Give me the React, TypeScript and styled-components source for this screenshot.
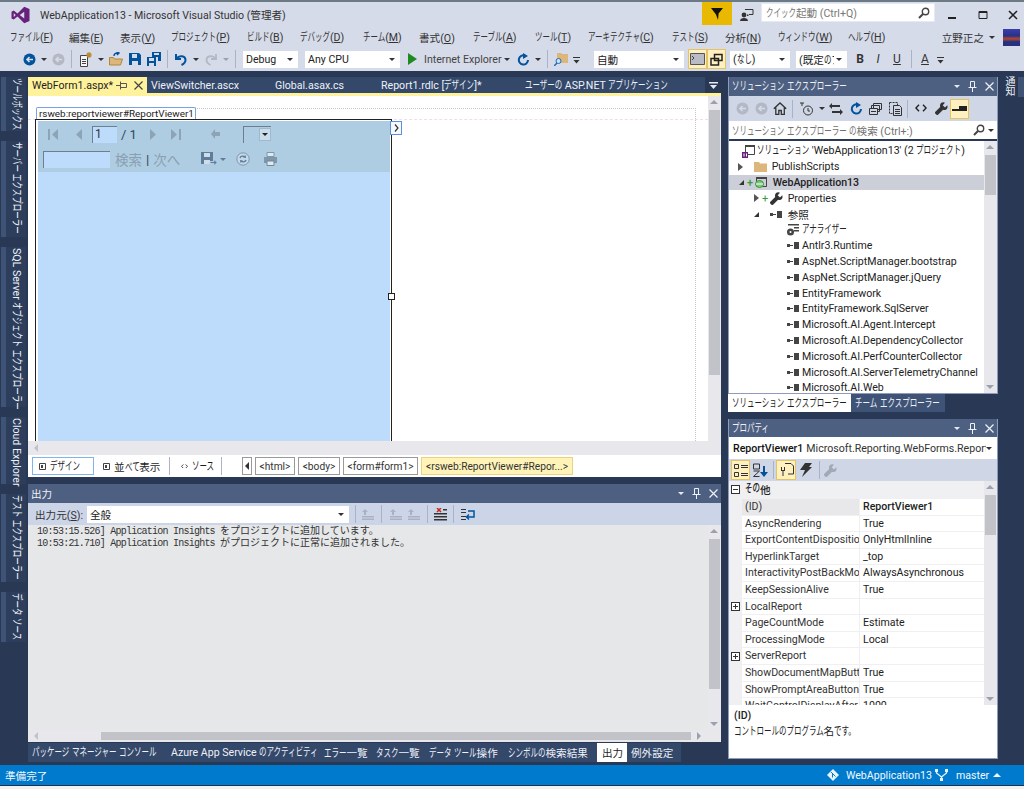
import React from 'react';
import styled, { createGlobalStyle } from 'styled-components';

const GlobalStyle = createGlobalStyle`
  html, body {
    margin: 0;
    width: 1024px;
    height: 789px;
    overflow: hidden;
    background: #f1f1f1;
  }

  body {
    font-family: Roboto, "Noto Sans CJK JP", sans-serif;
    font-size: 10.6px;
    color: #1e1e1e;
  }

  * {
    box-sizing: border-box;
  }
`;

// the reference font has narrow kana: each kana is 1em wide here, so squeeze the run
const Kana = styled.span<{ $n: number; $v?: boolean }>`
  display: inline-block;
  font-size: 1.08em;
  line-height: 1;
  white-space: pre;
  transform-origin: ${p => (p.$v ? 'center top' : 'left center')};
  transform: ${p => (p.$v ? 'scaleY(0.655)' : 'scaleX(0.655)')};
  ${p => (p.$v ? 'margin-bottom' : 'margin-right')}: ${p => -p.$n * 0.345}em;
`;

const T: React.FC<{ children: string; v?: boolean }> = ({ children, v }) => (
  <>
    {children.split(/([\u3002\u3040-\u30ff]+)/).map((part, i) =>
      i % 2 ? <Kana key={i} $n={part.length} $v={v}>{part}</Kana> : part,
    )}
  </>
);

const Window = styled.div`
  width: 1024px;
  height: 786px;
  display: flex;
  flex-direction: column;
  background: #293955;
  border-top: 2px solid #6c7a86;
  border-bottom: 1px solid #22304a;
`;

const Chrome = styled.header`
  flex: none;
  background: #d6dbe9;
`;

const TitleRow = styled.div`
  height: 25px;
  display: flex;
  align-items: center;
  padding-left: 11px;
`;

const Title = styled.span`
  margin-left: 10px;
  color: #333;
  white-space: nowrap;
`;

const FlagButton = styled.div`
  margin-left: auto;
  width: 30px;
  height: 23px;
  align-self: flex-start;
  display: flex;
  align-items: center;
  justify-content: center;
  background: #e8b900;
`;

const FeedbackSlot = styled.div`
  width: 29px;
  display: flex;
  justify-content: center;
`;

const QuickLaunch = styled.div`
  width: 174px;
  height: 19px;
  margin-top: -4px;
  padding: 0 4px;
  display: flex;
  align-items: center;
  justify-content: space-between;
  background: #fff;
  border: 1px solid #e6e9f1;
  color: #777;
`;

const WindowButtons = styled.div`
  width: 89px;
  display: flex;
  justify-content: space-between;
  padding: 0 6px 0 12px;
`;

const MenuRow = styled.nav`
  height: 20px;
  display: flex;
  align-items: center;
  padding-left: 10px;
  color: #333;
`;

const MenuItem = styled.span<{ $w: number }>`
  flex: none;
  width: ${p => p.$w}px;
  white-space: nowrap;
`;

const UserName = styled.span`
  margin-left: auto;
  color: #333;
  display: flex;
  align-items: center;
  gap: 5px;
`;

const Avatar = styled.span`
  width: 17px;
  height: 17px;
  margin: 0 4px 0 3px;
  background: linear-gradient(180deg, #3a3fb0 0%, #2a2f88 40%, #b0492c 58%, #27307f 75%);
`;

const ToolRow = styled.div<{ $bg?: string; $h: number; $pl?: number }>`
  flex: none;
  height: ${p => p.$h}px;
  display: flex;
  align-items: center;
  padding-left: ${p => p.$pl ?? 0}px;
  background: ${p => p.$bg ?? 'transparent'};
`;

const Slot = styled.span<{ $w: number; $on?: boolean; $ml?: number }>`
  flex: none;
  width: ${p => p.$w}px;
  height: ${p => (p.$on ? '20px' : 'auto')};
  margin-left: ${p => p.$ml ?? 0}px;
  display: flex;
  align-items: center;
  justify-content: center;
  background: ${p => (p.$on ? '#fff0c0' : 'transparent')};
  border: ${p => (p.$on ? '1px solid #e5c365' : 'none')};
  font-size: 12px;
  color: #333;
`;

const Sep = styled.span<{ $w: number }>`
  flex: none;
  width: ${p => p.$w}px;
  height: 18px;
  display: flex;
  justify-content: center;

  &::after {
    content: '';
    width: 1px;
    background: #a9b2c6;
  }
`;

const Grip = styled.span<{ $w: number }>`
  flex: none;
  width: ${p => p.$w}px;
  height: 16px;
  display: flex;
  justify-content: center;

  &::after {
    content: '';
    width: 5px;
    background-image: radial-gradient(#8a92a5 0.6px, transparent 0.7px);
    background-size: 2px 2px;
  }
`;

const Caret = styled.i<{ $c?: string }>`
  flex: none;
  display: block;
  width: 0;
  height: 0;
  border-left: 3px solid transparent;
  border-right: 3px solid transparent;
  border-top: 3px solid ${p => p.$c ?? '#333'};
`;

const Select = styled.span<{ $w: number; $ml?: number }>`
  flex: none;
  width: ${p => p.$w}px;
  height: 17px;
  margin-left: ${p => p.$ml ?? 0}px;
  padding: 0 5px 0 3px;
  display: flex;
  align-items: center;
  justify-content: space-between;
  gap: 2px;
  background: #fff;
  color: #222;
  white-space: nowrap;
`;

const SelectText = styled.span`
  flex: 1;
  min-width: 0;
  overflow: hidden;
`;

const PlayLabel = styled.span`
  flex: none;
  width: 78px;
  color: #444;
  white-space: nowrap;
`;

const Ico = styled.svg`
  display: block;
  flex: none;
`;

const Body = styled.div`
  flex: 1;
  min-height: 0;
  display: flex;
  padding-top: 6px;
`;

const SideStrip = styled.aside<{ $w: number }>`
  flex: none;
  width: ${p => p.$w}px;
  display: flex;
  flex-direction: column;
`;

const VTab = styled.div<{ $h: number; $mb: number }>`
  flex: none;
  width: 25px;
  height: ${p => p.$h}px;
  margin-bottom: ${p => p.$mb}px;
  margin-left: 1px;
  padding-top: 1px;
  border-left: 5px solid #3f5377;
  background: #2c3e5c;
  color: #eef1f7;
  line-height: 20px;
  writing-mode: vertical-rl;
  text-orientation: sideways;
  white-space: nowrap;
`;

const RightTab = styled.div`
  width: 26px;
  height: 20px;
  padding-left: 5px;
  border-right: 6px solid #3f5377;
  color: #eef1f7;
  font-size: 10px;
  line-height: 10px;
  text-align: center;
`;

const CenterColumn = styled.main`
  flex: none;
  width: 693px;
  display: flex;
  flex-direction: column;
`;

const RightColumn = styled.section`
  flex: none;
  width: 270px;
  margin-left: 7px;
  display: flex;
  flex-direction: column;
`;

const DocWell = styled.div`
  flex: none;
  height: 400px;
  display: flex;
  flex-direction: column;
`;

const DocTabs = styled.div`
  flex: none;
  height: 16px;
  display: flex;
  color: #f2f4f8;
`;

const DocTabStrip = styled.div`
  width: 677px;
  display: flex;
  align-items: center;
  background: #34486a;
`;

const DocTab = styled.span<{ $w: number; $active?: boolean }>`
  flex: none;
  width: ${p => p.$w}px;
  height: 100%;
  padding: 0 4px;
  display: flex;
  align-items: center;
  background: ${p => (p.$active ? '#fff29d' : 'transparent')};
  color: ${p => (p.$active ? '#1e1e1e' : '#eef1f7')};
  white-space: nowrap;
`;

const TabActions = styled.span`
  margin-left: auto;
  display: flex;
  gap: 7px;
  align-items: center;
  color: #555;
`;

const TabMenu = styled.span`
  flex: 1;
  display: flex;
  justify-content: center;
  padding-top: 5px;
`;

const YellowRule = styled.div`
  flex: none;
  height: 3px;
  background: #fff29d;
`;

const DesignRow = styled.div`
  flex: none;
  height: 345px;
  display: flex;
  background: #fff;
`;

const Surface = styled.div`
  position: relative;
  flex: 1;
  overflow: hidden;
  padding: 11px 0 0 7px;
  display: flex;
  flex-direction: column;
  align-items: flex-start;
`;

const PageGuide = styled.div`
  position: absolute;
  left: 36px;
  top: 12px;
  width: 632px;
  height: 345px;
  border-top: 1px dotted #c6c6c6;
  border-right: 1px dotted #c6c6c6;
`;

const MarginGuide = styled.div`
  position: absolute;
  left: 0;
  right: 0;
  top: 23px;
  border-top: 1px dashed #f4dede;
`;

const ControlTag = styled.div`
  position: relative;
  z-index: 1;
  width: 160px;
  height: 12px;
  margin-left: 1px;
  padding: 0 2px;
  background: #fff;
  border: 1px solid #7ba2e0;
  border-bottom: none;
  border-radius: 2px 2px 0 0;
  color: #222;
  font-size: 9.9px;
  line-height: 11px;
  white-space: nowrap;
`;

const Control = styled.div`
  position: relative;
  z-index: 1;
  width: 357px;
  flex: 1;
  padding: 1px 0 0 2px;
  display: flex;
  flex-direction: column;
  border: 1px solid #222;
  border-bottom: none;
  background: #fff;
`;

const ReportBar = styled.div`
  flex: none;
  height: 51px;
  width: 352px;
  background: #aecde2;
`;

const ReportBody = styled.div`
  flex: 1;
  width: 352px;
  background: #bddcfc;
`;

const PageInput = styled.span<{ $w: number; $ml: number }>`
  flex: none;
  width: ${p => p.$w}px;
  height: 17px;
  margin-left: ${p => p.$ml}px;
  padding-left: 2px;
  background: #bddcfc;
  border-top: 1px solid #6d7f8e;
  border-left: 1px solid #6d7f8e;
  color: #334;
  font-size: 12px;
  line-height: 15px;
`;

const PageCount = styled.span`
  flex: none;
  width: 22px;
  margin-left: 4px;
  color: #33475a;
  font-size: 13px;
`;

const ReportCombo = styled.span`
  flex: none;
  width: 28px;
  height: 17px;
  margin-left: 18px;
  display: flex;
  align-items: center;
  justify-content: flex-end;
  border-top: 1px solid #6d7f8e;
  border-left: 1px solid #6d7f8e;
`;

const ComboButton = styled.span`
  width: 12px;
  height: 13px;
  display: flex;
  align-items: center;
  justify-content: center;
  border: 1px solid #9fb8cc;
  background: #c9dded;
`;

const FindLabel = styled.span<{ $ml: number; $dark?: boolean }>`
  flex: none;
  margin-left: ${p => p.$ml}px;
  color: ${p => (p.$dark ? '#33475a' : '#8b9fb0')};
  font-size: 13.5px;
`;

const Handle = styled.span`
  position: absolute;
  right: -4px;
  top: 173px;
  width: 7px;
  height: 7px;
  background: #fff;
  border: 1px solid #222;
`;

const SmartTag = styled.span`
  position: absolute;
  right: -11px;
  top: 1px;
  width: 12px;
  height: 14px;
  display: flex;
  align-items: center;
  justify-content: center;
  background: #f4f8ff;
  border: 1px solid #5c8fdc;
`;

const VScroll = styled.div<{ $top: number; $h: number }>`
  flex: none;
  width: 13px;
  position: relative;
  background: #e8e8ec;

  &::before {
    content: '';
    position: absolute;
    left: 1px;
    right: 1px;
    top: ${p => p.$top}px;
    height: ${p => p.$h}px;
    background: #c2c3c9;
  }
`;

const ArrowUp = styled.i`
  position: absolute;
  left: 2px;
  top: 4px;
  border-left: 4px solid transparent;
  border-right: 4px solid transparent;
  border-bottom: 4px solid #9aa0ae;
`;

const ArrowDown = styled.i`
  position: absolute;
  left: 2px;
  bottom: 4px;
  border-left: 4px solid transparent;
  border-right: 4px solid transparent;
  border-top: 4px solid #9aa0ae;
`;

const HScroll = styled.div<{ $h: number }>`
  flex: none;
  height: ${p => p.$h}px;
  display: flex;
  align-items: center;
  padding-left: 6px;
  background: #e8e8ec;
`;

const ArrowLeft = styled.i<{ $c?: string }>`
  flex: none;
  border-top: 4px solid transparent;
  border-bottom: 4px solid transparent;
  border-right: 4px solid ${p => p.$c ?? '#c2c3c9'};
`;

const HThumb = styled.span`
  width: 590px;
  height: 8px;
  margin-left: 63px;
  background: #c2c3c9;
`;

const ArrowRight = styled.i`
  flex: none;
  margin-left: 6px;
  border-top: 4px solid transparent;
  border-bottom: 4px solid transparent;
  border-left: 4px solid #9aa0ae;
`;

const ViewBar = styled.div`
  flex: 1;
  display: flex;
  align-items: center;
  padding-left: 4px;
  background: #fff;
`;

const ViewButton = styled.span<{ $w: number; $on?: boolean }>`
  flex: none;
  width: ${p => p.$w}px;
  height: 18px;
  padding-left: ${p => (p.$on ? 6 : 8)}px;
  display: flex;
  align-items: center;
  gap: 4px;
  border: 1px solid ${p => (p.$on ? '#7fb4ee' : 'transparent')};
  white-space: nowrap;
`;

const CrumbTrail = styled.span`
  margin-left: 18px;
  display: flex;
  gap: 3px;
`;

const Crumb = styled.span<{ $w: number; $on?: boolean }>`
  flex: none;
  width: ${p => p.$w}px;
  height: 18px;
  display: flex;
  align-items: center;
  justify-content: center;
  border: 1px solid ${p => (p.$on ? '#ecd27e' : '#9a9a9a')};
  background: ${p => (p.$on ? '#fff3b8' : '#fff')};
  color: #333;
  font-size: 10.2px;
  white-space: nowrap;
`;

const OutputPanel = styled.div`
  flex: none;
  height: 278px;
  margin-top: 7px;
  display: flex;
  flex-direction: column;
`;

const PanelTitle = styled.div<{ $h: number }>`
  flex: none;
  height: ${p => p.$h}px;
  padding: 0 3px 0 3px;
  display: flex;
  align-items: center;
  justify-content: space-between;
  background: #4d6082;
  color: #f0f2f7;
  white-space: nowrap;
`;

const PanelGlyphs = styled.span`
  display: flex;
  align-items: center;
  gap: 8px;
`;

const OutputLabel = styled.span`
  flex: none;
  width: 59px;
  padding-left: 7px;
  color: #333;
  white-space: nowrap;
`;

const OutputBody = styled.div`
  flex: 1;
  min-height: 0;
  display: flex;
  background: #e6e7e8;
`;

const OutputText = styled.div`
  flex: 1;
  margin-top: -1px;
  padding: 0 0 0 9px;
  color: #333;
  font-family: "Liberation Mono", "Noto Sans CJK JP", monospace;
  font-size: 10px;
  white-space: pre;
`;

const OutputLine = styled.div`
  height: 12px;
  line-height: 12px;
`;

const MonoRun = styled.span`
  letter-spacing: -0.77px;
`;

const WideRun = styled.span`
  font-family: "Noto Sans CJK JP", sans-serif;
  line-height: 12px;
`;

const BottomTabs = styled.div`
  flex: none;
  width: 653px;
  height: 19px;
  margin-top: 1px;
  display: flex;
  background: #34486a;
`;

const BottomTab = styled.span<{ $w: number; $on?: boolean }>`
  flex: none;
  width: ${p => p.$w}px;
  padding-left: ${p => (p.$on ? 5 : 4)}px;
  display: flex;
  align-items: center;
  background: ${p => (p.$on ? '#fff' : 'transparent')};
  color: ${p => (p.$on ? '#1e1e1e' : '#eef1f7')};
  white-space: nowrap;
`;

const ToolPanel = styled.div<{ $h: number }>`
  flex: none;
  height: ${p => p.$h}px;
  display: flex;
  flex-direction: column;
  border-left: 1px solid #8e9bbc;
  border-right: 1px solid #8e9bbc;
  border-bottom: 1px solid #8e9bbc;
`;

const SearchBox = styled.div`
  flex: none;
  height: 18px;
  padding: 0 3px;
  display: flex;
  align-items: center;
  justify-content: space-between;
  background: #fff;
  color: #717171;
  white-space: nowrap;
`;

const SearchTools = styled.span`
  display: flex;
  align-items: center;
  gap: 3px;
`;

const TreeArea = styled.div`
  flex: 1;
  min-height: 0;
  margin-top: 2px;
  display: flex;
  background: #fff;
`;

const TreeList = styled.div`
  flex: 1;
  min-width: 0;
  overflow: hidden;
  padding-top: 2px;
`;

const TreeRow = styled.div<{ $indent: number; $sel?: boolean; $bold?: boolean }>`
  height: 15.8px;
  padding-left: ${p => p.$indent}px;
  display: flex;
  align-items: center;
  background: ${p => (p.$sel ? '#ccced8' : 'transparent')};
  color: #222;
  font-weight: ${p => (p.$bold ? 500 : 400)};
  white-space: pre;
`;

const TreeIcon = styled.span`
  flex: none;
  width: 16px;
  margin-right: 1px;
  display: flex;
  justify-content: center;
`;

const Expander = styled.span`
  flex: none;
  width: 11px;
  display: flex;
  justify-content: center;
`;

const PlusMark = styled.span`
  flex: none;
  width: 6px;
  color: #3a9a3a;
  font-size: 11px;
  line-height: 11px;
`;

const TreeOpen = styled.i`
  display: block;
  border-left: 5px solid transparent;
  border-bottom: 5px solid #333;
`;

const TreeClosed = styled.i`
  display: block;
  border-top: 4px solid transparent;
  border-bottom: 4px solid transparent;
  border-left: 5px solid #555;
`;

const PanelTabs = styled.div`
  flex: none;
  height: 18px;
  display: flex;
  margin-bottom: 7px;
`;

const PanelTab = styled.span<{ $w: number; $on?: boolean }>`
  flex: none;
  width: ${p => p.$w}px;
  padding-left: 4px;
  display: flex;
  align-items: center;
  background: ${p => (p.$on ? '#fff' : '#3f5377')};
  color: ${p => (p.$on ? '#1e1e1e' : '#eef1f7')};
  white-space: nowrap;
`;

const ObjectCombo = styled.div`
  flex: none;
  height: 22px;
  padding: 0 5px 0 4px;
  display: flex;
  align-items: center;
  justify-content: space-between;
  background: #fff;
  white-space: nowrap;
`;

const ObjectName = styled.span`
  width: 253px;
  overflow: hidden;
  color: #333;

  b {
    font-weight: 500;
    color: #111;
    margin-right: 3px;
  }
`;

const PropGrid = styled.div`
  flex: none;
  height: 224px;
  display: flex;
  background: #f0f0f3;
`;

const PropList = styled.div`
  flex: 1;
  min-width: 0;
  overflow: hidden;
`;

const PropRow = styled.div`
  height: 16.6px;
  display: flex;
  align-items: stretch;
  white-space: nowrap;
`;

const CategoryRow = styled(PropRow)`
  height: 18px;
  padding-bottom: 2px;
`;

const Gutter = styled.span`
  flex: none;
  width: 13px;
  display: flex;
  align-items: center;
  justify-content: center;
`;

const PlusBox = styled.span`
  width: 9px;
  height: 9px;
  position: relative;
  border: 1px solid #333;
  background: #fff;

  &::before {
    content: '';
    position: absolute;
    left: 1px;
    right: 1px;
    top: 3px;
    height: 1px;
    background: #333;
  }
`;

const PlusBoxOpen = styled(PlusBox)`
  &::after {
    content: '';
    position: absolute;
    top: 1px;
    bottom: 1px;
    left: 3px;
    width: 1px;
    background: #333;
  }
`;

const CategoryName = styled.span`
  padding-left: 3px;
  display: flex;
  align-items: center;
  color: #222;
  font-weight: 500;
`;

const PropName = styled.span<{ $sel?: boolean }>`
  flex: none;
  width: 117px;
  padding-left: 3px;
  overflow: hidden;
  background: ${p => (p.$sel ? '#e8e8ea' : '#fff')};
  border-bottom: 1px solid #f0f0f3;
  color: #333;
  line-height: 15px;
`;

const PropValue = styled.span<{ $bold?: boolean }>`
  flex: 1;
  margin-left: 1px;
  padding-left: 3px;
  overflow: hidden;
  background: #fff;
  border-bottom: 1px solid #f0f0f3;
  color: #222;
  font-weight: ${p => (p.$bold ? 500 : 400)};
  line-height: 15px;
`;

const DescBox = styled.div`
  flex: 1;
  padding: 3px 5px;
  background: #fff;
  color: #222;
  line-height: 16px;

  b {
    display: block;
    font-weight: 500;
  }
`;

const StatusBar = styled.footer`
  flex: none;
  height: 20px;
  padding: 0 4px 0 5px;
  display: flex;
  align-items: center;
  background: #007acc;
  color: #f3f8fc;
`;

const StatusRight = styled.span`
  margin-left: auto;
  display: flex;
  align-items: center;
  white-space: nowrap;
`;

const StatusText = styled.span<{ $w: number; $ml: number }>`
  width: ${p => p.$w}px;
  margin-left: ${p => p.$ml}px;
`;

const UpCaret = styled.i`
  margin: 0 19px 0 6px;
  border-left: 4px solid transparent;
  border-right: 4px solid transparent;
  border-bottom: 4px solid #f3f8fc;
`;

/* --- drawn icons --- */

type IconProps = { s?: number; c?: string };

const VsLogo = () => (
  <Ico width="19" height="18" viewBox="0 0 24 24">
    <path fillRule="evenodd" fill="#68217a" d="M17 1 8 10 3 6 0 7.5v9L3 18l5-4 9 9 7-3V4zm0 6.5v9L11 12zM3 9.5 5.7 12 3 14.5z" />
  </Ico>
);

const Pennant = () => (
  <Ico width="14" height="14" viewBox="0 0 14 14">
    <path fill="#111" d="M1 1h12L8.600 6.600 8 13 6 7.500z" />
  </Ico>
);

const Feedback = () => (
  <Ico width="14" height="14" viewBox="0 0 14 14">
    <circle cx="4" cy="7" r="2.400" fill="#333" />
    <path fill="#333" d="M0 13c0-2 1.600-3 4-3s4 1 4 3z" />
    <path fill="none" stroke="#333" d="M5 1.500h8v5H9L7.500 8V6.500" />
  </Ico>
);

const Magnifier = ({ s = 12, c = '#444' }: IconProps) => (
  <Ico width={s} height={s} viewBox="0 0 12 12">
    <circle cx="7.500" cy="4.500" r="3.200" fill="none" stroke={c} strokeWidth="1.400" />
    <path stroke={c} strokeWidth="2" d="M5 7 1 11" />
  </Ico>
);

const WinMin = () => <Ico width="10" height="10" viewBox="0 0 10 10"><path fill="#222" d="M1 7h8v2H1z" /></Ico>;
const WinMax = () => <Ico width="10" height="10" viewBox="0 0 10 10"><path fill="none" stroke="#222" d="M1 1.500h8v7H1z" /><path fill="#222" d="M1 1h8v2H1z" /></Ico>;
const WinClose = () => <Ico width="10" height="10" viewBox="0 0 10 10"><path stroke="#222" strokeWidth="1.600" d="m1 1 8 8M9 1 1 9" /></Ico>;

const Round = ({ c, arrow = true }: { c: string; arrow?: boolean }) => (
  <Ico width="13" height="13" viewBox="0 0 13 13">
    <circle cx="6.500" cy="6.500" r="6" fill={c} />
    {arrow && <path fill="none" stroke="#d6dbe9" strokeWidth="1.600" d="M10 6.500H4M6.500 4 4 6.500 6.500 9" />}
  </Ico>
);

const NewProject = () => (
  <Ico width="14" height="15" viewBox="0 0 14 15">
    <path fill="#f6f6f6" stroke="#444" d="M2.500 3.500h7v11h-7z" />
    <path fill="#444" d="M4 7h4v1H4zm0 2h4v1H4zm0 2h4v1H4z" />
    <path stroke="#b88a2c" strokeWidth="1.200" d="M11 0v6M8 3h6M9 1l4 4M13 1 9 5" />
  </Ico>
);

const OpenFolder = () => (
  <Ico width="14" height="14" viewBox="0 0 14 14">
    <path fill="#dcb67a" stroke="#b0883c" d="M.5 5.500h4l1 1.500h8l-2 6H.5z" />
    <path fill="none" stroke="#00539c" strokeWidth="1.400" d="M5 4c0-2 2-3 4-3M7.500 0 10 1 8 3" />
  </Ico>
);

const SaveOne = () => (
  <Ico width="12" height="12" viewBox="0 0 12 12">
    <path fill="#00539c" d="M0 0h10l2 2v10H0z" />
    <path fill="#d6dbe9" d="M3 1h5v4H3zM3 8h6v4H3z" />
  </Ico>
);

const SaveAll = () => (
  <Ico width="14" height="14" viewBox="0 0 14 14">
    <path fill="#00539c" d="M5 0h9v9h-3V5H5z" />
    <path fill="#00539c" d="M0 5h9v9H0z" />
    <path fill="#d6dbe9" d="M2 6h5v3H2zM2 11h5v3H2zM7 1h5v2H7z" />
  </Ico>
);

const Undo = ({ c = '#00539c' }: IconProps) => (
  <Ico width="13" height="14" viewBox="0 0 13 14">
    <path fill="none" stroke={c} strokeWidth="2" d="M2 2v5h5M2.500 6.500C5 3 11.500 3.500 11.500 8c0 2.500-2 4-4 5" />
  </Ico>
);

const Redo = () => (
  <Ico width="13" height="14" viewBox="0 0 13 14">
    <path fill="none" stroke="#b3b8c4" strokeWidth="1.800" d="M11 2v5H6M10.500 6.500C8 3 1.500 3.500 1.500 8c0 2.500 2 4 4 5" />
  </Ico>
);

const Play = () => <Ico width="9" height="12" viewBox="0 0 9 12"><path fill="#1f8a1f" d="M0 0v12l9-6z" /></Ico>;

const Refresh = ({ s = 13 }: IconProps) => (
  <Ico width={s} height={s} viewBox="0 0 13 13">
    <path fill="none" stroke="#00539c" strokeWidth="2" d="M8 2.600A4.600 4.600 0 1 0 11 7" />
    <path fill="#00539c" d="M6 0v6l5-3z" />
  </Ico>
);

const FolderFind = () => (
  <Ico width="14" height="14" viewBox="0 0 14 14">
    <path fill="#dcb67a" d="M3 1h4l1 1h6v9H3z" />
    <circle cx="4.500" cy="9" r="2.500" fill="#cfe2f5" stroke="#1c6cb8" />
    <path stroke="#1c6cb8" strokeWidth="1.500" d="M3 11 0 14" />
  </Ico>
);

const Overflow = () => (
  <Ico width="7" height="12" viewBox="0 0 7 12">
    <path fill="#333" d="M0 4h7v1H0zM.500 7h6L3.500 10.500z" />
  </Ico>
);

const Terminal = () => (
  <Ico width="15" height="12" viewBox="0 0 15 12">
    <path fill="#b9bcc4" stroke="#555" d="M.5.500h14v11H.5z" />
    <path stroke="#444" fill="none" d="m2 3 2 2-2 2" />
  </Ico>
);

const TwoWin = () => (
  <Ico width="13" height="13" viewBox="0 0 13 13">
    <path fill="none" stroke="#222" strokeWidth="1.500" d="M4.500 1.500h7.500v6H4.500zM1 5.500h7.500v6.500H1z" />
  </Ico>
);

const Pin = ({ c = '#eef1f7' }: IconProps) => (
  <Ico width="9" height="11" viewBox="0 0 9 11">
    <path fill="none" stroke={c} d="M2.500.5h4v6h-4zM.5 6.500h8M4.500 7v4" />
  </Ico>
);

const PinSide = () => (
  <Ico width="11" height="9" viewBox="0 0 11 9">
    <path fill="none" stroke="#555" d="M4.500 2.500h6v4h-6zM4.500.5v8M0 4.500h4" />
  </Ico>
);

const CloseX = ({ c = '#eef1f7', s = 9 }: IconProps) => (
  <Ico width={s} height={s} viewBox="0 0 9 9">
    <path stroke={c} strokeWidth="1.200" d="m.5.5 8 8M8.500.5l-8 8" />
  </Ico>
);

const MenuGlyph = () => (
  <Ico width="9" height="7" viewBox="0 0 9 7">
    <path fill="#e6e9f1" d="M0 0h9v1.500H0zM1 3h7L4.500 7z" />
  </Ico>
);

const SkipIcon = ({ flip }: { flip?: boolean }) => (
  <Ico width="10" height="11" viewBox="0 0 10 11" transform={flip ? 'scale(-1 1)' : undefined}>
    <path fill="#8ea3b5" d="M0 0h2v11H0zM10 0v11L4 5.500z" />
  </Ico>
);

const StepIcon = ({ flip }: { flip?: boolean }) => (
  <Ico width="6" height="11" viewBox="0 0 6 11" transform={flip ? 'scale(-1 1)' : undefined}>
    <path fill="#8ea3b5" d="M6 0v11L0 5.500z" />
  </Ico>
);

const BackDiamond = () => (
  <Ico width="9" height="10" viewBox="0 0 9 10">
    <path fill="#8ea3b5" d="M4 0 0 5l4 5V7h5V3H4z" />
  </Ico>
);

const DiskIcon = () => (
  <Ico width="16" height="14" viewBox="0 0 16 14">
    <path fill="#5f7d9a" d="M0 0h12v12H0z" />
    <path fill="#cfdde8" d="M3 1h6v4H3zM3 8h6v4H3z" />
    <path fill="#5f7d9a" stroke="#aecde2" d="M9 9.500h4V7l3 3.500-3 3.500v-2.500H9z" />
  </Ico>
);

const RoundRefresh = () => (
  <Ico width="14" height="14" viewBox="0 0 14 14">
    <circle cx="7" cy="7" r="6.200" fill="#c3d8e8" stroke="#7f97ab" />
    <path fill="none" stroke="#5f7d9a" strokeWidth="1.300" d="M4 6c.5-2 3.500-2.500 5-1M10 8c-.5 2-3.500 2.500-5 1" />
    <path fill="#5f7d9a" d="m9.500 3 .5 3-3-.5zM4.500 11 4 8l3 .5z" />
  </Ico>
);

const PrintIcon = () => (
  <Ico width="15" height="14" viewBox="0 0 15 14">
    <path fill="#dfe9f1" stroke="#7f97ab" d="M4 .5h7v4H4z" />
    <path fill="#7f97ab" d="M1 5h13v6H1z" />
    <path fill="#dfe9f1" stroke="#6f879b" d="M4 9h7v4.500H4z" />
  </Ico>
);

const HomeIcon = () => (
  <Ico width="14" height="13" viewBox="0 0 14 13">
    <path fill="none" stroke="#333" strokeWidth="1.300" d="M.8 6.800 7 1l6.200 5.800M2.800 5.500v7h3v-4h2.500v4h3v-7" />
  </Ico>
);

const HistoryIcon = () => (
  <Ico width="14" height="14" viewBox="0 0 14 14">
    <circle cx="8" cy="8.500" r="4.500" fill="none" stroke="#333" />
    <path fill="none" stroke="#333" d="M8 6v3h2M0 1h4M2 1v3" />
  </Ico>
);

const SyncIcon = () => (
  <Ico width="14" height="12" viewBox="0 0 14 12">
    <path fill="#333" d="M0 3 3 0v2h8v2H3v2zM14 9l-3 3v-2H3V8h8V6z" />
  </Ico>
);

const CollapseIcon = () => (
  <Ico width="13" height="12" viewBox="0 0 13 12">
    <path fill="none" stroke="#333" d="M4.500.5h8v6h-8zM2.500 2.500h8v6h-8z" />
    <path fill="#cfd6e5" stroke="#333" d="M.5 5.500h8v6h-8z" />
    <path stroke="#333" d="M2 8.500h5" />
  </Ico>
);

const ShowAllIcon = () => (
  <Ico width="13" height="14" viewBox="0 0 13 14">
    <path fill="none" stroke="#333" strokeDasharray="2 1" d="M.5.500h8v11h-8z" />
    <path fill="#cfd6e5" stroke="#333" d="M4.500 3.500h6l2 2v8h-8z" />
    <path fill="#333" d="M6 7h5v1H6zm0 2h5v1H6zm0 2h5v1H6z" />
  </Ico>
);

const CodeIcon = ({ s = 12 }: IconProps) => (
  <Ico width={s} height={s * 0.67} viewBox="0 0 12 8">
    <path fill="none" stroke="#222" strokeWidth="1.400" d="M4 .8.900 4 4 7.200M8 .8 11.100 4 8 7.200" />
  </Ico>
);

const Wrench = ({ c = '#333' }: IconProps) => (
  <Ico width="13" height="13" viewBox="0 0 13 13">
    <path fill={c} d="M12.500 3 10 5.500 7.700 3.200 10 .8C8-.4 5.200.5 5 3.500c0 .6 0 1 .2 1.400L.4 9.700c-.6.600-.6 1.500 0 2.100l.8.800c.6.600 1.500.6 2.100 0l4.800-4.800c.500.200 1 .200 1.500.200 2.800-.2 3.600-3 2.400-5z" />
  </Ico>
);

const DockBar = () => (
  <Ico width="15" height="5" viewBox="0 0 15 5">
    <path fill="#222" d="M0 3h15v2H0zM7 0h8v3H7z" />
  </Ico>
);

const SolutionIcon = () => (
  <Ico width="13" height="14" viewBox="0 0 13 14">
    <path fill="none" stroke="#444" d="M3.500 1.500h9v9h-9z" />
    <path fill="#444" d="M3 1h10v2H3z" />
    <path fill="#68217a" d="M0 8h6v6H0z" />
    <path fill="#fff" d="M1.500 9.500h1v3h-1zM4 9.500h1v3H4z" />
  </Ico>
);

const FolderIcon = () => (
  <Ico width="13" height="11" viewBox="0 0 13 11">
    <path fill="#dcb67a" d="M0 1h5l1 1.500h7V11H0z" />
  </Ico>
);

const WebProject = () => (
  <Ico width="12" height="12" viewBox="0 0 12 12">
    <path fill="none" stroke="#444" d="M1.500 1.500h10v9h-10z" />
    <path fill="#444" d="M1 1h11v2H1z" />
    <ellipse cx="4.500" cy="8" rx="4" ry="3.500" fill="#7fc47f" stroke="#3a9a3a" />
    <path stroke="#fff" d="M1 8h7" />
  </Ico>
);

const RefIcon = () => (
  <Ico width="12" height="7" viewBox="0 0 12 7">
    <path fill="#444" d="M0 2h3v3H0zM3 3h3v1H3zM7 0h5v7H7z" />
  </Ico>
);

const AnalyzerIcon = () => (
  <Ico width="12" height="12" viewBox="0 0 12 12">
    <path fill="#444" d="M1 0h11v1.500H1zM7 3h5v1.500H7zM7 6h5v1.500H7z" />
    <circle cx="3.500" cy="8" r="3.500" fill="#444" />
    <circle cx="3.500" cy="8" r="1" fill="#fff" />
  </Ico>
);

const CategorizedIcon = () => (
  <Ico width="14" height="13" viewBox="0 0 14 13">
    <path fill="none" stroke="#333" d="M.5.500h4v4h-4zM.5 8.500h4v4h-4z" />
    <path fill="#333" d="M7 1h7v1H7zm0 2h7v1H7zm0 6h7v1H7zm0 2h7v1H7z" />
  </Ico>
);

const SortIcon = () => (
  <Ico width="15" height="14" viewBox="0 0 15 14">
    <path fill="none" stroke="#333" d="M.5 1h6v5h-6zM.5 8h6l-6 5.500h6" />
    <path fill="#00539c" d="M10 3h2v6h3l-4 5-4-5h3z" />
  </Ico>
);

const PropPageIcon = () => (
  <Ico width="15" height="14" viewBox="0 0 15 14">
    <path fill="none" stroke="#333" d="M6 .5h6l2.500 2.500v8H9" />
    <path fill="#333" d="M2 4h1v3h2V4h1v4H4.500v5h-1V8H2z" />
  </Ico>
);

const Bolt = () => (
  <Ico width="12" height="14" viewBox="0 0 12 14">
    <path fill="#333" d="M5 0h7L9 4h3L2 14l3-7H0z" />
  </Ico>
);

const OutputTool = ({ c = '#aab1c0' }: IconProps) => (
  <Ico width="12" height="12" viewBox="0 0 12 12">
    <path fill={c} d="M0 8h12v1.500H0zM0 10.500h12V12H0zM3 1 6 4H4v3H2V4H0z" />
  </Ico>
);

const ClearOutput = () => (
  <Ico width="13" height="13" viewBox="0 0 13 13">
    <path fill="#333" d="M0 5h13v1.500H0zM0 8h13v1.500H0zM0 11h13v1.500H0z" />
    <path stroke="#c42b1c" strokeWidth="1.500" d="m3 0 4 4M7 0 3 4" />
    <path fill="#333" d="M9 1h4v1.500H9z" />
  </Ico>
);

const WrapOutput = () => (
  <Ico width="14" height="13" viewBox="0 0 14 13">
    <path fill="#333" d="M0 1h5v1H0zM0 4h5v1H0zM0 8h5v1H0zM0 11h5v1H0z" />
    <path fill="none" stroke="#00539c" strokeWidth="1.500" d="M7 3h6v6H6M8 6.500 5.500 9 8 11.500" />
  </Ico>
);

const GitDiamond = () => (
  <Ico width="12" height="12" viewBox="0 0 12 12">
    <path fill="#e8f2fa" d="M6 0 12 6 6 12 0 6z" />
    <path stroke="#007acc" d="M4 3l4.500 4.500M5.500 4.500v4" />
  </Ico>
);

const BranchIcon = () => (
  <Ico width="13" height="12" viewBox="0 0 13 12">
    <path fill="#e8f2fa" d="M0 0h3v3H0zM10 0h3v3h-3zM5 9h3v3H5z" />
    <path fill="none" stroke="#e8f2fa" strokeWidth="1.300" d="M1.500 3v1L6.500 8V9M11.500 3v1L6.500 8" />
  </Ico>
);

const SideGlyph = () => (
  <Ico width="7" height="7" viewBox="0 0 7 7">
    <path fill="none" stroke="#444" d="M.5.500h6v6h-6z" />
    <path fill="#444" d="M2 2h2v3H2z" />
  </Ico>
);

/* --- data --- */

const MENU: [string, string, number][] = [
  ['ファイル', 'F', 59], ['編集', 'E', 51], ['表示', 'V', 51], ['プロジェクト', 'P', 76], ['ビルド', 'B', 53],
  ['デバッグ', 'D', 63], ['チーム', 'M', 56], ['書式', 'O', 54], ['テーブル', 'A', 62], ['ツール', 'T', 53],
  ['アーキテクチャ', 'C', 84], ['テスト', 'S', 53], ['分析', 'N', 53], ['ウィンドウ', 'W', 70], ['ヘルプ', 'H', 60],
];

const SIDE_TABS: [string, number, number][] = [
  ['ツールボックス', 54, 10],
  ['サーバー エクスプローラー', 96, 10],
  ['SQL Server オブジェクト エクスプローラー', 160, 10],
  ['Cloud Explorer', 67, 10],
  ['テスト エクスプローラー', 88, 10],
  ['データ ソース', 50, 0],
];

const BOTTOM_TABS: [string, number, boolean?][] = [
  ['パッケージ マネージャー コンソール', 139], ['Azure App Service のアクティビティ', 153], ['エラー一覧', 52],
  ['タスク一覧', 53], ['データ ツール操作', 79], ['シンボルの検索結果', 93], ['出力', 30, true], ['例外設定', 54],
];

const REFS = [
  'Antlr3.Runtime', 'AspNet.ScriptManager.bootstrap', 'AspNet.ScriptManager.jQuery', 'EntityFramework',
  'EntityFramework.SqlServer', 'Microsoft.AI.Agent.Intercept', 'Microsoft.AI.DependencyCollector',
  'Microsoft.AI.PerfCounterCollector', 'Microsoft.AI.ServerTelemetryChannel', 'Microsoft.AI.Web',
];

const PROPS: { name: string; value?: string; plus?: boolean; sel?: boolean; bold?: boolean }[] = [
  { name: '(ID)', value: 'ReportViewer1', sel: true, bold: true },
  { name: 'AsyncRendering', value: 'True' },
  { name: 'ExportContentDisposition', value: 'OnlyHtmlInline' },
  { name: 'HyperlinkTarget', value: '_top' },
  { name: 'InteractivityPostBackMode', value: 'AlwaysAsynchronous' },
  { name: 'KeepSessionAlive', value: 'True' },
  { name: 'LocalReport', plus: true },
  { name: 'PageCountMode', value: 'Estimate' },
  { name: 'ProcessingMode', value: 'Local' },
  { name: 'ServerReport', plus: true },
  { name: 'ShowDocumentMapButton', value: 'True' },
  { name: 'ShowPromptAreaButton', value: 'True' },
  { name: 'WaitControlDisplayAfter', value: '1000' },
];

const PanelHead: React.FC<{ title: string; h: number }> = ({ title, h }) => (
  <PanelTitle $h={h}>
    <span><T>{title}</T></span>
    <PanelGlyphs>
      <Caret $c="#e6e9f1" />
      <Pin />
      <CloseX />
    </PanelGlyphs>
  </PanelTitle>
);

const MainToolbar = () => (
  <ToolRow $h={24} $pl={9}>
    <Grip $w={9} />
    <Slot $w={22}><Round c="#00539c" /></Slot>
    <Slot $w={8}><Caret /></Slot>
    <Slot $w={20}><Round c="#b3b8c4" /></Slot>
    <Sep $w={6} />
    <Slot $w={22}><NewProject /></Slot>
    <Slot $w={10}><Caret /></Slot>
    <Slot $w={20}><OpenFolder /></Slot>
    <Slot $w={18}><SaveOne /></Slot>
    <Slot $w={20}><SaveAll /></Slot>
    <Sep $w={6} />
    <Slot $w={20}><Undo /></Slot>
    <Slot $w={12}><Caret /></Slot>
    <Slot $w={18}><Redo /></Slot>
    <Slot $w={12}><Caret $c="#9aa0ae" /></Slot>
    <Sep $w={6} />
    <Select $w={55} $ml={5}><SelectText>Debug</SelectText><Caret /></Select>
    <Select $w={95} $ml={7}><SelectText>Any CPU</SelectText><Caret /></Select>
    <Slot $w={24}><Play /></Slot>
    <PlayLabel>Internet Explorer</PlayLabel>
    <Slot $w={10}><Caret /></Slot>
    <Slot $w={22}><Refresh /></Slot>
    <Slot $w={8}><Caret /></Slot>
    <Sep $w={10} />
    <Slot $w={18}><FolderFind /></Slot>
    <Slot $w={12}><Overflow /></Slot>
    <Grip $w={8} />
    <Select $w={90} $ml={4}><SelectText>自動</SelectText><Caret /></Select>
    <Slot $w={19} $ml={4} $on><Terminal /></Slot>
    <Slot $w={19} $on><TwoWin /></Slot>
    <Select $w={60} $ml={4}><SelectText><T>(なし)</T></SelectText><Caret /></Select>
    <Select $w={51} $ml={6}><SelectText><T>(既定のフォント)</T></SelectText><Caret /></Select>
    <Slot $w={18} $ml={4}><b>B</b></Slot>
    <Slot $w={18}><i>I</i></Slot>
    <Slot $w={20}><u>U</u></Slot>
    <Sep $w={8} />
    <Slot $w={20}><u>A</u></Slot>
    <Slot $w={10}><Overflow /></Slot>
  </ToolRow>
);

const ReportToolbar = () => (
  <ReportBar>
    <ToolRow $h={26} $pl={0}>
      <Slot $w={30}><SkipIcon /></Slot>
      <Slot $w={22}><StepIcon /></Slot>
      <PageInput $w={25} $ml={2}>1</PageInput>
      <PageCount>/ 1</PageCount>
      <Slot $w={20}><StepIcon flip /></Slot>
      <Slot $w={20} $ml={3}><SkipIcon flip /></Slot>
      <Slot $w={20} $ml={19}><BackDiamond /></Slot>
      <ReportCombo><ComboButton><Caret $c="#222" /></ComboButton></ReportCombo>
    </ToolRow>
    <ToolRow $h={24} $pl={5}>
      <PageInput $w={67} $ml={0} />
      <FindLabel $ml={5}>検索</FindLabel>
      <FindLabel $ml={4} $dark>|</FindLabel>
      <FindLabel $ml={4}>次へ</FindLabel>
      <Slot $w={18} $ml={20}><DiskIcon /></Slot>
      <Slot $w={8} $ml={1}><Caret $c="#5f7d9a" /></Slot>
      <Slot $w={16} $ml={8}><RoundRefresh /></Slot>
      <Slot $w={16} $ml={11}><PrintIcon /></Slot>
    </ToolRow>
  </ReportBar>
);

const App: React.FC = () => (
  <>
    <GlobalStyle />
    <Window>
      <Chrome>
        <TitleRow>
          <VsLogo />
          <Title>WebApplication13 - Microsoft Visual Studio (管理者)</Title>
          <FlagButton><Pennant /></FlagButton>
          <FeedbackSlot><Feedback /></FeedbackSlot>
          <QuickLaunch><span><T>クイック起動 (Ctrl+Q)</T></span><Magnifier /></QuickLaunch>
          <WindowButtons><WinMin /><WinMax /><WinClose /></WindowButtons>
        </TitleRow>
        <MenuRow>
          {MENU.map(([label, key, w]) => <MenuItem key={label} $w={w}><T>{label}</T>(<u>{key}</u>)</MenuItem>)}
          <UserName>立野正之<Caret /><Avatar /></UserName>
        </MenuRow>
        <MainToolbar />
      </Chrome>

      <Body>
        <SideStrip $w={28}>
          {SIDE_TABS.map(([label, h, mb]) => <VTab key={label} $h={h} $mb={mb}><T v>{label}</T></VTab>)}
        </SideStrip>

        <CenterColumn>
          <DocWell>
            <DocTabs>
              <DocTabStrip>
                <DocTab $w={119} $active>
                  WebForm1.aspx*
                  <TabActions><PinSide /><CloseX c="#444" /></TabActions>
                </DocTab>
                <DocTab $w={124}>ViewSwitcher.ascx</DocTab>
                <DocTab $w={106}>Global.asax.cs</DocTab>
                <DocTab $w={144}><span><T>Report1.rdlc [デザイン]*</T></span></DocTab>
                <DocTab $w={170}><span><T>ユーザーの ASP.NET アプリケーション</T></span></DocTab>
              </DocTabStrip>
              <TabMenu><MenuGlyph /></TabMenu>
            </DocTabs>
            <YellowRule />
            <DesignRow>
              <Surface>
                <PageGuide />
                <MarginGuide />
                <ControlTag>rsweb:reportviewer#ReportViewer1</ControlTag>
                <Control>
                  <ReportToolbar />
                  <ReportBody />
                  <Handle />
                  <SmartTag><Ico width="5" height="8" viewBox="0 0 5 8"><path fill="none" stroke="#333" strokeWidth="1.200" d="m1 .5 3 3.500-3 3.500" /></Ico></SmartTag>
                </Control>
              </Surface>
              <VScroll $top={14} $h={265}><ArrowUp /></VScroll>
            </DesignRow>
            <HScroll $h={14}><ArrowLeft /></HScroll>
            <ViewBar>
              <ViewButton $w={62} $on><SideGlyph /><span><T>デザイン</T></span></ViewButton>
              <ViewButton $w={72}><SideGlyph /><span><T>並べて表示</T></span></ViewButton>
              <Sep $w={6} />
              <ViewButton $w={46}><CodeIcon s={7} /><span><T>ソース</T></span></ViewButton>
              <Sep $w={6} />
              <CrumbTrail>
                <Crumb $w={10}><ArrowLeft $c="#333" /></Crumb>
                <Crumb $w={40}>&lt;html&gt;</Crumb>
                <Crumb $w={42}>&lt;body&gt;</Crumb>
                <Crumb $w={75}>&lt;form#form1&gt;</Crumb>
                <Crumb $w={152} $on>&lt;rsweb:ReportViewer#Repor...&gt;</Crumb>
              </CrumbTrail>
            </ViewBar>
          </DocWell>

          <OutputPanel>
            <PanelHead title="出力" h={19} />
            <ToolRow $h={22} $bg="#ccd5e8">
              <OutputLabel>出力元(<u>S</u>):</OutputLabel>
              <Select $w={262}><SelectText>全般</SelectText><Caret /></Select>
              <Sep $w={12} />
              <Slot $w={14}><OutputTool /></Slot>
              <Sep $w={12} />
              <Slot $w={18}><OutputTool /></Slot>
              <Slot $w={18}><OutputTool /></Slot>
              <Sep $w={8} />
              <Slot $w={18}><ClearOutput /></Slot>
              <Sep $w={8} />
              <Slot $w={22}><WrapOutput /></Slot>
            </ToolRow>
            <OutputBody>
              <OutputText>
                <OutputLine><MonoRun>10:53:15.526] Application Insights </MonoRun><WideRun>をプロジェクトに追加しています。</WideRun></OutputLine>
                <OutputLine><MonoRun>10:53:21.710] Application Insights </MonoRun><WideRun>がプロジェクトに正常に追加されました。</WideRun></OutputLine>
              </OutputText>
              <VScroll $top={14} $h={150}><ArrowUp /><ArrowDown /></VScroll>
            </OutputBody>
            <HScroll $h={12}>
              <ArrowLeft />
              <HThumb />
              <ArrowRight />
            </HScroll>
            <BottomTabs>
              {BOTTOM_TABS.map(([label, w, on]) => <BottomTab key={label} $w={w} $on={on}><span><T>{label}</T></span></BottomTab>)}
            </BottomTabs>
          </OutputPanel>
        </CenterColumn>

        <RightColumn>
          <ToolPanel $h={317}>
            <PanelHead title="ソリューション エクスプローラー" h={19} />
            <ToolRow $h={25} $bg="#cfd6e5" $pl={4}>
              <Slot $w={18}><Round c="#b3b8c4" /></Slot>
              <Slot $w={20}><Round c="#b3b8c4" /></Slot>
              <Slot $w={18}><HomeIcon /></Slot>
              <Sep $w={6} />
              <Slot $w={24}><HistoryIcon /></Slot>
              <Slot $w={6}><Caret /></Slot>
              <Slot $w={22}><SyncIcon /></Slot>
              <Slot $w={18}><Refresh /></Slot>
              <Slot $w={20}><CollapseIcon /></Slot>
              <Slot $w={20}><ShowAllIcon /></Slot>
              <Sep $w={4} />
              <Slot $w={24}><CodeIcon /></Slot>
              <Slot $w={16}><Wrench /></Slot>
              <Slot $w={19} $ml={1} $on><DockBar /></Slot>
            </ToolRow>
            <SearchBox>
              <span><T>ソリューション エクスプローラー の検索 (Ctrl+:)</T></span>
              <SearchTools><Magnifier /><Caret /></SearchTools>
            </SearchBox>
            <TreeArea>
              <TreeList>
                <TreeRow $indent={11}><TreeIcon><SolutionIcon /></TreeIcon><span><T>ソリューション 'WebApplication13' (2 プロジェクト)</T></span></TreeRow>
                <TreeRow $indent={6}><Expander><TreeClosed /></Expander><Slot $w={6} /><TreeIcon><FolderIcon /></TreeIcon> PublishScripts</TreeRow>
                <TreeRow $indent={7} $sel $bold><Expander><TreeOpen /></Expander><PlusMark>+</PlusMark><TreeIcon><WebProject /></TreeIcon> WebApplication13</TreeRow>
                <TreeRow $indent={22}><Expander><TreeClosed /></Expander><PlusMark>+</PlusMark><TreeIcon><Wrench /></TreeIcon> Properties</TreeRow>
                <TreeRow $indent={22}><Expander><TreeOpen /></Expander><Slot $w={6} /><TreeIcon><RefIcon /></TreeIcon> 参照</TreeRow>
                <TreeRow $indent={56}><TreeIcon><AnalyzerIcon /></TreeIcon> <span><T>アナライザー</T></span></TreeRow>
                {REFS.map(r => <TreeRow key={r} $indent={56}><TreeIcon><RefIcon /></TreeIcon> {r}</TreeRow>)}
              </TreeList>
              <VScroll $top={14} $h={40}><ArrowUp /><ArrowDown /></VScroll>
            </TreeArea>
          </ToolPanel>
          <PanelTabs>
            <PanelTab $w={123} $on><span><T>ソリューション エクスプローラー</T></span></PanelTab>
            <PanelTab $w={94}><span><T>チーム エクスプローラー</T></span></PanelTab>
          </PanelTabs>
          <ToolPanel $h={340}>
            <PanelHead title="プロパティ" h={18} />
            <ObjectCombo>
              <ObjectName><b>ReportViewer1</b>Microsoft.Reporting.WebForms.ReportViewer</ObjectName>
              <Caret />
            </ObjectCombo>
            <ToolRow $h={22} $bg="#cfd6e5" $pl={2}>
              <Slot $w={19} $on><CategorizedIcon /></Slot>
              <Slot $w={20}><SortIcon /></Slot>
              <Sep $w={6} />
              <Slot $w={20} $on><PropPageIcon /></Slot>
              <Slot $w={20}><Bolt /></Slot>
              <Sep $w={6} />
              <Slot $w={16}><Wrench c="#a2a8b6" /></Slot>
            </ToolRow>
            <PropGrid>
              <PropList>
                <CategoryRow>
                  <Gutter><PlusBox /></Gutter>
                  <CategoryName><T>その他</T></CategoryName>
                </CategoryRow>
                {PROPS.map(p => (
                  <PropRow key={p.name}>
                    <Gutter>{p.plus && <PlusBoxOpen />}</Gutter>
                    <PropName $sel={p.sel}>{p.name}</PropName>
                    <PropValue $bold={p.bold}>{p.value}</PropValue>
                  </PropRow>
                ))}
              </PropList>
              <VScroll $top={14} $h={40}><ArrowUp /><ArrowDown /></VScroll>
            </PropGrid>
            <DescBox>
              <b>(ID)</b>
              <T>コントロールのプログラム名です。</T>
            </DescBox>
          </ToolPanel>
        </RightColumn>

        <SideStrip $w={26}>
          <RightTab>通知</RightTab>
        </SideStrip>
      </Body>

      <StatusBar>
        準備完了
        <StatusRight>
          <GitDiamond />
          <StatusText $w={85} $ml={7}>WebApplication13</StatusText>
          <Slot $w={14} $ml={3}><BranchIcon /></Slot>
          <StatusText $w={31} $ml={8}>master</StatusText>
          <UpCaret />
        </StatusRight>
      </StatusBar>
    </Window>
  </>
);

export default App;
